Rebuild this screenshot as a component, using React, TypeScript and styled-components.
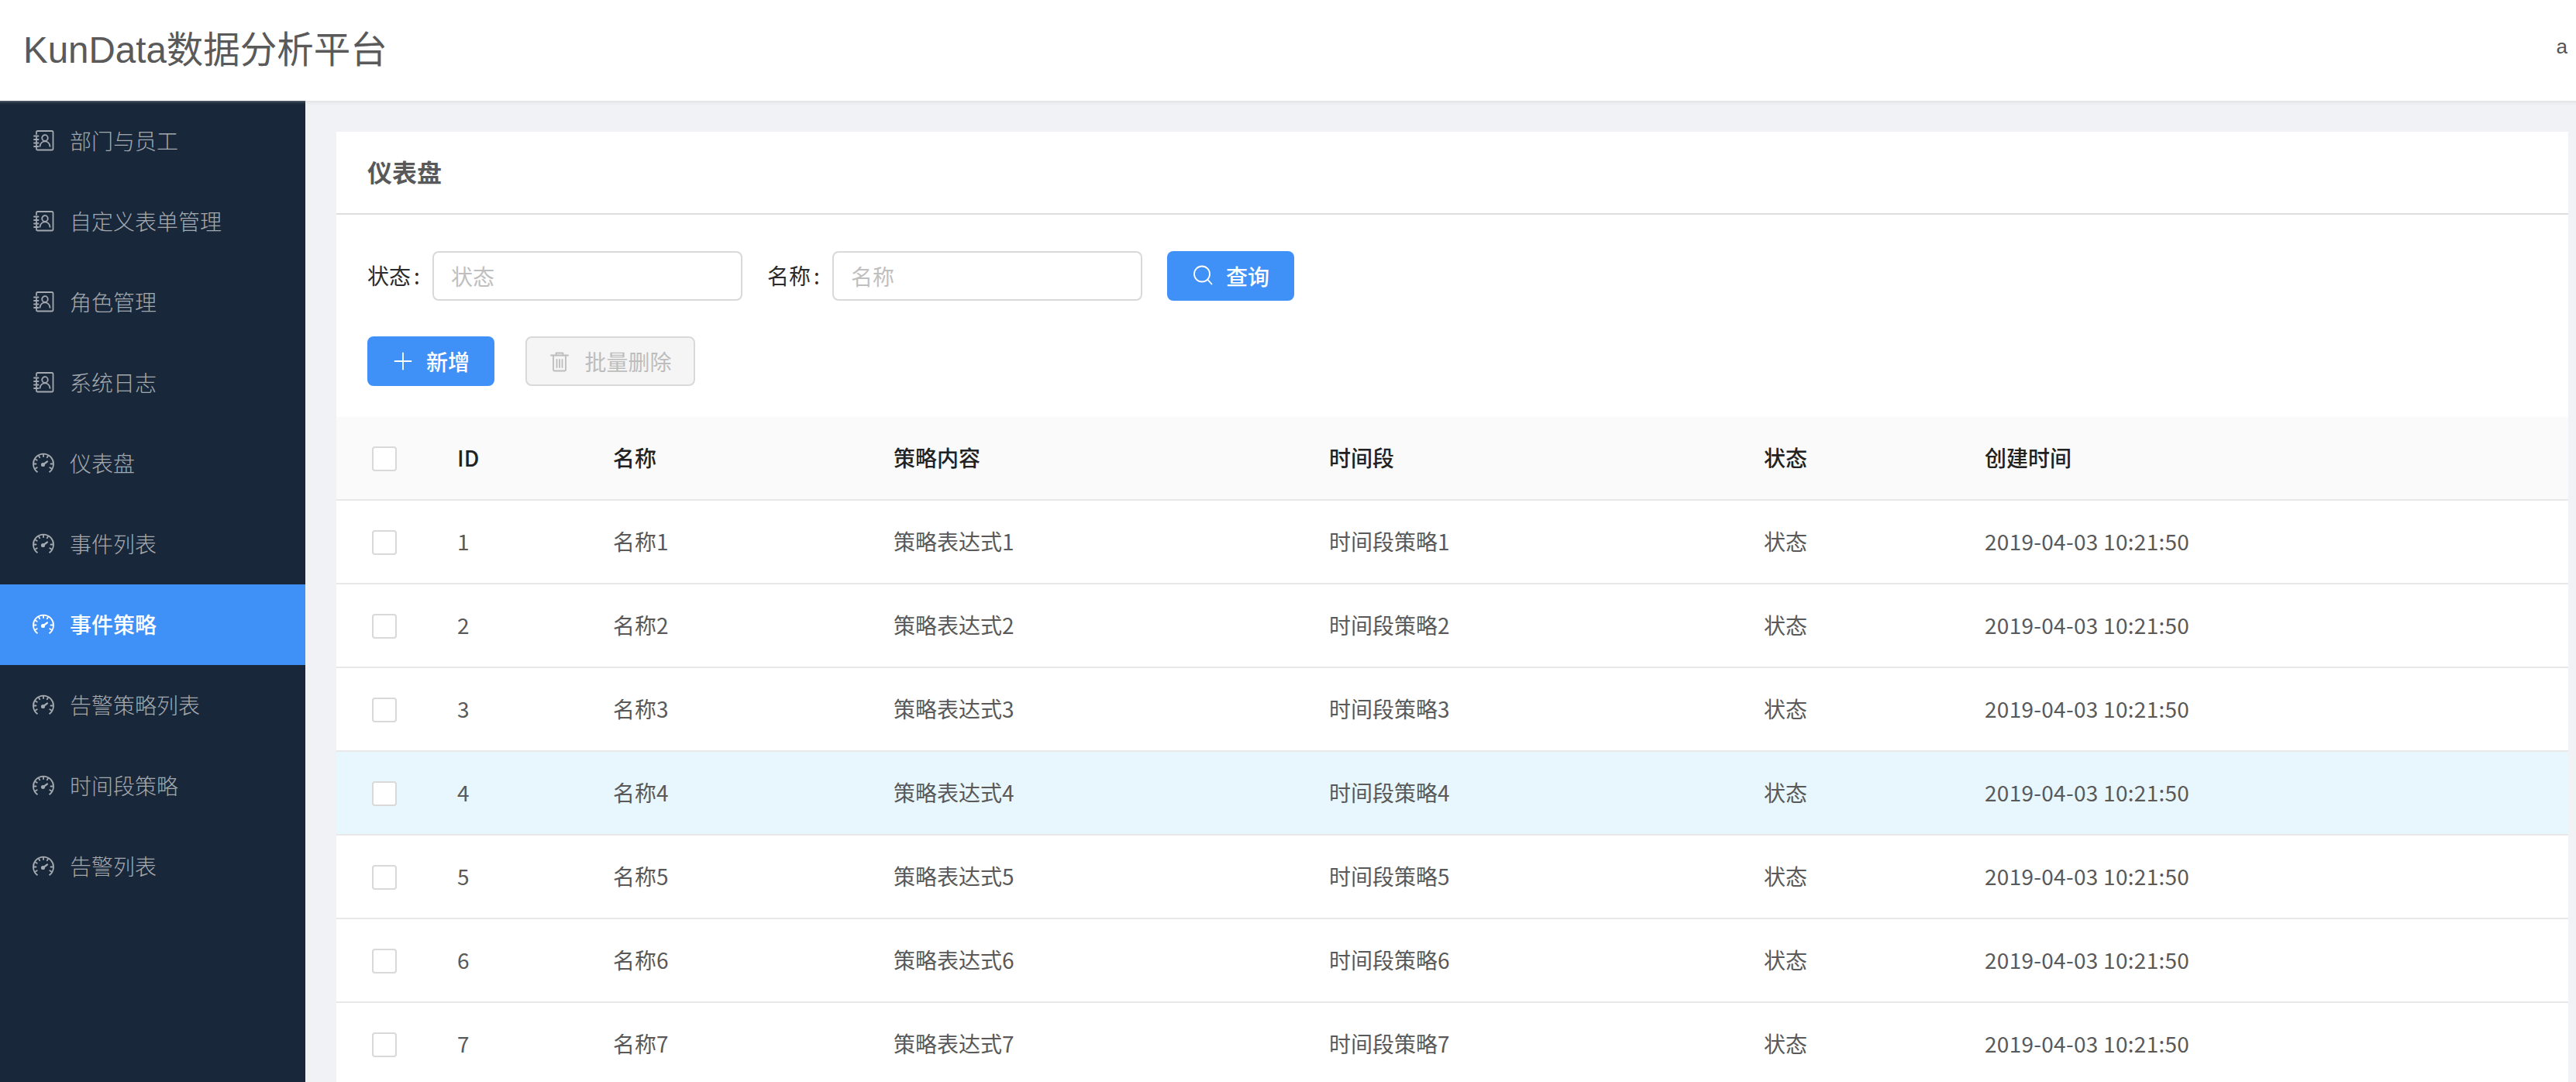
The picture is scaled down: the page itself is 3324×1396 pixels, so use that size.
import styled, { createGlobalStyle } from "styled-components";

const FONT = `"Noto Sans CJK SC", "Liberation Sans", sans-serif`;

const menuItems = [
  { label: "部门与员工", icon: "contacts" },
  { label: "自定义表单管理", icon: "contacts" },
  { label: "角色管理", icon: "contacts" },
  { label: "系统日志", icon: "contacts" },
  { label: "仪表盘", icon: "dashboard" },
  { label: "事件列表", icon: "dashboard" },
  { label: "事件策略", icon: "dashboard", active: true },
  { label: "告警策略列表", icon: "dashboard" },
  { label: "时间段策略", icon: "dashboard" },
  { label: "告警列表", icon: "dashboard" },
];

const rows = [1, 2, 3, 4, 5, 6, 7];

const tickAngles = [-120, -90, -60, -30, 0, 30, 90, 120];

const ContactsIcon = () => (
  <IconSvg viewBox="0 0 28 28">
    <path d="M5 5V2.500A1.500 1.500 0 0 1 6.500 1H25a1.500 1.500 0 0 1 1.500 1.500V24a1.500 1.500 0 0 1-1.500 1.500H6.500A1.500 1.500 0 0 1 5 24v-2" />
    <path d="M5 9v2M5 13.500v2M5 18v2" />
    <path d="M2 7.500h5.500M2 12h5.500M2 16.500h5.500M2 21h5.500" />
    <circle cx="16" cy="10" r="3.800" />
    <path d="M9.500 20.800c.4-3.800 3.200-6.500 6.500-6.500s6.100 2.700 6.500 6.500" />
  </IconSvg>
);

const DashboardIcon = () => (
  <IconSvg viewBox="0 0 28 28">
    <path d="M6.500 25.200A13 13 0 1 1 21.500 25.200" strokeLinecap="butt" />
    {tickAngles.map((a) => {
      const r = (a * Math.PI) / 180;
      return (
        <line
          key={a}
          x1={14 + 9.5 * Math.sin(r)}
          y1={14.5 - 9.5 * Math.cos(r)}
          x2={14 + 12 * Math.sin(r)}
          y2={14.5 - 12 * Math.cos(r)}
        />
      );
    })}
    <path d="M13.500 15.500L19 11.500" strokeWidth="2.200" />
    <circle cx="13.500" cy="15.500" r="1.700" fill="currentColor" />
  </IconSvg>
);

const SearchIcon = () => (
  <IconSvg viewBox="0 0 28 28">
    <circle cx="13" cy="11.500" r="10" />
    <path d="M20.200 18.700L25.500 24.500" />
  </IconSvg>
);

const PlusIcon = () => (
  <IconSvg viewBox="0 0 28 28">
    <path d="M14 3.500v21M3.500 14h21" />
  </IconSvg>
);

const TrashIcon = () => (
  <IconSvg viewBox="0 0 28 28">
    <path d="M3 6.500h22" />
    <path d="M9.500 6.500V3.500h9v3" />
    <path d="M6 6.500V25a1.500 1.500 0 0 0 1.500 1.500h13A1.500 1.500 0 0 0 22 25V6.500" />
    <path d="M10.500 12v10M14 12v10M17.500 12v10" />
  </IconSvg>
);

const App = () => {
  return (
    <Page>
      <GlobalStyle />
      <TopBar>
        <Logo>KunData数据分析平台</Logo>
        <UserName>a</UserName>
      </TopBar>
      <Body>
        <Sidebar>
          {menuItems.map((item) => (
            <MenuItem key={item.label} $active={item.active}>
              {item.icon === "contacts" ? <ContactsIcon /> : <DashboardIcon />}
              <MenuText>{item.label}</MenuText>
            </MenuItem>
          ))}
        </Sidebar>
        <Content>
          <Card>
            <CardHead>仪表盘</CardHead>
            <FilterRow>
              <Label>
                状态<Colon>:</Colon>
              </Label>
              <TextInput placeholder="状态" />
              <Label $second>
                名称<Colon>:</Colon>
              </Label>
              <TextInput placeholder="名称" />
              <PrimaryButton $search>
                <SearchIcon />
                查询
              </PrimaryButton>
            </FilterRow>
            <ActionRow>
              <PrimaryButton>
                <PlusIcon />
                新增
              </PrimaryButton>
              <DisabledButton disabled>
                <TrashIcon />
                批量删除
              </DisabledButton>
            </ActionRow>
            <Table>
              <colgroup>
                <col style={{ width: 124 }} />
                <col style={{ width: 201 }} />
                <col style={{ width: 362 }} />
                <col style={{ width: 562 }} />
                <col style={{ width: 561 }} />
                <col style={{ width: 285 }} />
                <col />
              </colgroup>
              <thead>
                <tr>
                  <CheckCell as="th">
                    <CheckBox />
                  </CheckCell>
                  <HeadCell>ID</HeadCell>
                  <HeadCell>名称</HeadCell>
                  <HeadCell>策略内容</HeadCell>
                  <HeadCell>时间段</HeadCell>
                  <HeadCell>状态</HeadCell>
                  <HeadCell>创建时间</HeadCell>
                </tr>
              </thead>
              <tbody>
                {rows.map((n) => (
                  <Row key={n} $hover={n === 4}>
                    <CheckCell>
                      <CheckBox />
                    </CheckCell>
                    <Cell>{n}</Cell>
                    <Cell>名称{n}</Cell>
                    <Cell>策略表达式{n}</Cell>
                    <Cell>时间段策略{n}</Cell>
                    <Cell>状态</Cell>
                    <DateCell>2019-04-03 10:21:50</DateCell>
                  </Row>
                ))}
              </tbody>
            </Table>
          </Card>
        </Content>
      </Body>
    </Page>
  );
};

export default App;

const GlobalStyle = createGlobalStyle`
  html, body {
    margin: 0;
    padding: 0;
    height: 100%;
    overflow: hidden;
    background: #f0f2f5;
  }
  * {
    box-sizing: border-box;
  }
`;

const IconSvg = styled.svg`
  width: 28px;
  height: 28px;
  flex: none;
  fill: none;
  stroke: currentColor;
  stroke-width: 1.8;
  stroke-linecap: round;
  stroke-linejoin: round;
`;

const Page = styled.div`
  height: 100vh;
  display: flex;
  flex-direction: column;
  overflow: hidden;
  font-family: ${FONT};
  font-size: 28px;
`;

const TopBar = styled.header`
  height: 130px;
  flex: none;
  background: #fff;
  display: flex;
  align-items: center;
  justify-content: space-between;
  padding: 0 11px 10px 30px;
`;

const Logo = styled.h1`
  margin: 0;
  font-family: "Liberation Sans", "Noto Sans CJK SC", sans-serif;
  font-size: 47.5px;
  font-weight: 400;
  color: #5a5a5a;
`;

const UserName = styled.span`
  font-family: "Liberation Sans", sans-serif;
  font-size: 26px;
  color: #555;
`;

const Body = styled.div`
  flex: 1;
  display: flex;
  min-height: 0;
`;

const Sidebar = styled.nav`
  width: 394px;
  flex: none;
  background: linear-gradient(#5b6878, #2a3848 2px, #182739 5px);
`;

const MenuItem = styled.div<{ $active?: boolean }>`
  height: 104px;
  display: flex;
  align-items: center;
  gap: 20px;
  padding-left: 42px;
  background: ${(props) => (props.$active ? "#4091f7" : "transparent")};
  color: ${(props) => (props.$active ? "#fff" : "#a3a9b0")};
  font-family: ${(props) =>
    props.$active
      ? FONT
      : `"Noto Sans CJK SC Light", "Noto Sans CJK SC", sans-serif`};
  font-weight: ${(props) => (props.$active ? 500 : 300)};
`;

const MenuText = styled.span`
  padding-bottom: 3px;
`;

const Content = styled.main`
  flex: 1;
  min-width: 0;
  padding: 40px 10px 0 40px;
  background: linear-gradient(#e2e4e8, #f0f2f5 6px);
`;

const Card = styled.section`
  background: #fff;
  min-height: 100%;
`;

const CardHead = styled.div`
  height: 107px;
  padding: 0 0 3px 40px;
  display: flex;
  align-items: center;
  border-bottom: 2px solid #dedede;
  font-size: 32px;
  font-weight: 700;
  color: #595959;
`;

const FilterRow = styled.div`
  display: flex;
  align-items: center;
  padding: 47px 0 0 40px;
`;

const Label = styled.label<{ $second?: boolean }>`
  width: 84px;
  padding-bottom: 2px;
  margin-left: ${(props) => (props.$second ? "32px" : "0")};
  color: #2b2b2b;
  white-space: nowrap;
`;

const Colon = styled.span`
  margin-left: 4px;
`;

const TextInput = styled.input`
  width: 400px;
  height: 64px;
  padding: 0 22px;
  border: 2px solid #d9d9d9;
  border-radius: 8px;
  outline: none;
  background: #fff;
  font-family: ${FONT};
  font-size: 28px;
  &::placeholder {
    color: #bfbfbf;
    opacity: 1;
  }
`;

const PrimaryButton = styled.button<{ $search?: boolean }>`
  width: 164px;
  height: 64px;
  margin-left: ${(props) => (props.$search ? "32px" : "0")};
  padding: 0;
  display: flex;
  align-items: center;
  justify-content: center;
  gap: 16px;
  border: none;
  border-radius: 8px;
  background: #4091f7;
  color: #fff;
  font-family: ${FONT};
  font-size: 28px;
  font-weight: 500;
`;

const ActionRow = styled.div`
  display: flex;
  gap: 40px;
  padding: 46px 0 40px 40px;
`;

const DisabledButton = styled.button`
  width: 219px;
  height: 64px;
  padding: 0;
  display: flex;
  align-items: center;
  justify-content: center;
  gap: 18px;
  border: 2px solid #d9d9d9;
  border-radius: 8px;
  background: #f5f5f5;
  color: #bdbdbd;
  font-family: ${FONT};
  font-size: 28px;
`;

const Table = styled.table`
  width: 100%;
  table-layout: fixed;
  border-collapse: separate;
  border-spacing: 0;
`;

const HeadCell = styled.th`
  height: 108px;
  padding: 0 0 3px 32px;
  text-align: left;
  background: #fafafa;
  border-bottom: 2px solid #e8e8e8;
  color: #222;
  font-weight: 500;
  font-size: 28px;
`;

const Row = styled.tr<{ $hover?: boolean }>`
  background: ${(props) => (props.$hover ? "#e8f7fe" : "#fff")};
`;

const Cell = styled.td`
  height: 108px;
  padding: 0 0 3px 32px;
  border-bottom: 2px solid #e8e8e8;
  color: #595959;
  white-space: nowrap;
`;

const DateCell = styled(Cell)`
  letter-spacing: 0.28px;
`;

const CheckCell = styled.td`
  height: 108px;
  padding: 2px 0 0 46px;
  text-align: left;
  background: inherit;
  border-bottom: 2px solid #e8e8e8;
  th& {
    background: #fafafa;
  }
`;

const CheckBox = styled.span`
  display: block;
  width: 32px;
  height: 32px;
  border: 2px solid #d9d9d9;
  border-radius: 4px;
  background: #fff;
`;
